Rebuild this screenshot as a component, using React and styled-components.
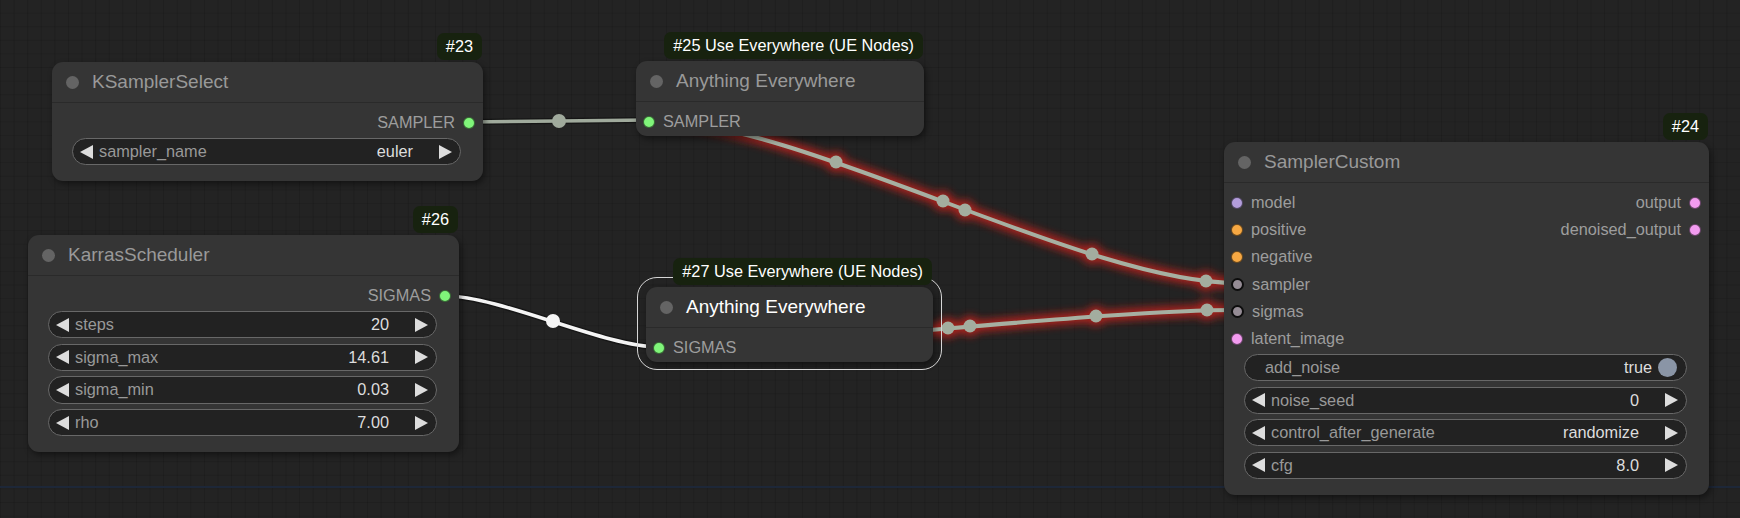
import React from 'react';
import styled, { createGlobalStyle, css } from 'styled-components';

const GlobalStyle = createGlobalStyle`
  html, body {
    margin: 0;
    padding: 0;
    background: #222;
  }
  body {
    font-family: "Liberation Sans", Arial, sans-serif;
  }
`;

// litegraph style bezier between two slot centers
const link = (x1, y1, x2, y2) => {
  const d = Math.hypot(x2 - x1, y2 - y1) * 0.25;
  return `M${x1} ${y1} C${x1 + d} ${y1} ${x2 - d} ${y2} ${x2} ${y2}`;
};

const upperDots = [[836, 162], [943, 201], [965, 210], [1092, 254], [1206, 281]];
const lowerDots = [[948, 328], [970, 326], [1096, 316], [1207, 310]];

const Canvas = styled.div`
  position: relative;
  width: 1740px;
  height: 518px;
  overflow: hidden;
  background-color: #232323;
  background-image:
    linear-gradient(90deg, rgba(0, 0, 0, 0.13) 1px, transparent 1px),
    linear-gradient(0deg, rgba(0, 0, 0, 0.1) 1px, transparent 1px);
  background-size: 13.6px 13.6px;
  font-family: "Liberation Sans", Arial, sans-serif;
`;

const Wires = styled.svg`
  position: absolute;
  inset: 0;
  z-index: 0;
`;

const Node = styled.div`
  position: absolute;
  left: ${({ $x }) => $x}px;
  top: ${({ $y }) => $y}px;
  width: ${({ $w }) => $w}px;
  z-index: 1;
  background: #353535;
  border-radius: 11px;
  box-shadow: 2px 3px 6px rgba(0, 0, 0, 0.45);

  ${({ $selected }) =>
    $selected &&
    css`
      &::before {
        content: '';
        position: absolute;
        inset: -10px -9px -8px -9px;
        border: 1.5px solid #d6d6d6;
        border-radius: 20px;
        pointer-events: none;
      }
    `}
`;

const Badge = styled.div`
  position: absolute;
  right: 1px;
  bottom: calc(100% + 2px);
  z-index: 2;
  height: 27px;
  line-height: 27px;
  padding: 0 9px;
  border-radius: 7px;
  background: #17220f;
  color: #fff;
  font-size: 16.3px;
  white-space: nowrap;
`;

const Title = styled.div`
  display: flex;
  align-items: center;
  gap: 13.5px;
  height: 41px;
  box-sizing: border-box;
  padding-left: 13.5px;
  border-bottom: 1px solid #2a2a2a;
`;

const TitleDot = styled.span`
  width: 13px;
  height: 13px;
  border-radius: 50%;
  background: #646464;
`;

const TitleText = styled.span`
  font-size: 19px;
  color: ${({ $selected }) => ($selected ? '#fff' : '#999')};
  white-space: nowrap;
`;

const Body = styled.div`
  display: flex;
  flex-direction: column;
  padding: 6px 0 ${({ $pb }) => ($pb == null ? 16 : $pb)}px;
`;

const SlotRow = styled.div`
  display: flex;
  align-items: center;
  justify-content: space-between;
  height: 27.2px;
`;

const Slot = styled.span`
  display: flex;
  align-items: center;
  gap: 8px;
  font-size: 16.3px;
  color: #9d9d9d;
  ${({ $out }) =>
    $out
      ? css`
          margin-left: auto;
          padding-right: 8px;
        `
      : css`
          padding-left: 7px;
        `}
`;

const SlotDot = styled.span`
  width: 12px;
  height: 12px;
  box-sizing: border-box;
  border-radius: 50%;
  background: ${({ $color }) => $color};
  border: 1px solid rgba(0, 0, 0, 0.55);
  ${({ $linked }) =>
    $linked &&
    css`
      width: 13px;
      height: 13px;
      background: #958c95;
      border: 2px solid #0d0d0d;
    `}
`;

const Widgets = styled.div`
  display: flex;
  flex-direction: column;
  gap: 5.4px;
  margin-top: 2px;
  padding: 0 22px 0 20px;
`;

const WidgetBox = styled.div`
  display: flex;
  align-items: center;
  height: 27.2px;
  box-sizing: border-box;
  padding: 0 8px 0 7px;
  border: 1px solid #686868;
  border-radius: 14px;
  background: #222;
  font-size: 16.3px;
`;

const ArrowLeft = styled.span`
  width: 0;
  height: 0;
  border-top: 7px solid transparent;
  border-bottom: 7px solid transparent;
  border-right: 13px solid #ddd;
`;

const ArrowRight = styled.span`
  width: 0;
  height: 0;
  border-top: 7px solid transparent;
  border-bottom: 7px solid transparent;
  border-left: 13px solid #ddd;
`;

const WidgetLabel = styled.span`
  flex: 1;
  margin-left: ${({ $plain }) => ($plain ? 13 : 6)}px;
  color: #999;
  white-space: nowrap;
`;

const WidgetValue = styled.span`
  margin-right: ${({ $toggle }) => ($toggle ? 5.5 : 26)}px;
  color: #ddd;
  white-space: nowrap;
`;

const ToggleKnob = styled.span`
  width: 19px;
  height: 19px;
  border-radius: 50%;
  background: #8a95a6;
  margin-right: 1.5px;
`;

const NumberWidget = ({ label, value }) => (
  <WidgetBox>
    <ArrowLeft />
    <WidgetLabel>{label}</WidgetLabel>
    <WidgetValue>{value}</WidgetValue>
    <ArrowRight />
  </WidgetBox>
);

const ToggleWidget = ({ label, value }) => (
  <WidgetBox>
    <WidgetLabel $plain>{label}</WidgetLabel>
    <WidgetValue $toggle>{value}</WidgetValue>
    <ToggleKnob />
  </WidgetBox>
);

const NodeTitle = ({ children, selected }) => (
  <Title>
    <TitleDot />
    <TitleText $selected={selected}>{children}</TitleText>
  </Title>
);

const GREEN = '#80f57a';
const PINK = '#f29bef';
const ORANGE = '#f6a843';
const LAVENDER = '#b39ddb';

const App = () => {
  return (
    <>
      <GlobalStyle />
      <Canvas>
        <Wires width="1740" height="518">
          <defs>
            <filter id="glow" x="-20%" y="-60%" width="140%" height="220%">
              <feGaussianBlur stdDeviation="4.5" />
            </filter>
            <filter id="soft" x="-50%" y="-50%" width="200%" height="200%">
              <feGaussianBlur stdDeviation="0.6" />
            </filter>
          </defs>

          <line x1="0" y1="487" x2="1740" y2="487" stroke="#1d2738" strokeWidth="2" />

          {/* sampler -> AE #25 */}
          <path d={link(469, 122, 649, 120)} stroke="#151515" strokeWidth="6" fill="none" />
          <path d={link(469, 122, 649, 120)} stroke="#a0aa9c" strokeWidth="3.5" fill="none" />
          <circle cx="559" cy="121" r="7" fill="#a0aa9c" filter="url(#soft)" />

          {/* sigmas -> AE #27 */}
          <path d={link(446, 296, 659, 347)} stroke="#111" strokeOpacity="0.7" strokeWidth="6.5" fill="none" />
          <path d={link(446, 296, 659, 347)} stroke="#f4f4f4" strokeWidth="3.5" fill="none" />
          <circle cx="553" cy="321" r="7" fill="#f6f6f6" filter="url(#soft)" />

          {/* use everywhere virtual links, red highlight */}
          <g filter="url(#glow)" opacity="0.85">
            <path d={link(649, 120, 1237, 283)} stroke="#c8231a" strokeWidth="11" fill="none" />
            <path d={link(659, 347, 1237, 310)} stroke="#c8231a" strokeWidth="11" fill="none" />
            {[...upperDots, ...lowerDots].map(([x, y], i) => (
              <circle key={i} cx={x} cy={y} r="10" fill="#c8231a" />
            ))}
          </g>
          <path d={link(649, 120, 1237, 283)} stroke="#a6b0a2" strokeWidth="4" fill="none" />
          <path d={link(659, 347, 1237, 310)} stroke="#a6b0a2" strokeWidth="4" fill="none" />
          {[...upperDots, ...lowerDots].map(([x, y], i) => (
            <circle key={i} cx={x} cy={y} r="6.5" fill="#a3ad9f" />
          ))}
        </Wires>

        <Node $x={52} $y={62} $w={431}>
          <Badge>#23</Badge>
          <NodeTitle>KSamplerSelect</NodeTitle>
          <Body>
            <SlotRow>
              <Slot $out>
                SAMPLER
                <SlotDot $color={GREEN} />
              </Slot>
            </SlotRow>
            <Widgets>
              <NumberWidget label="sampler_name" value="euler" />
            </Widgets>
          </Body>
        </Node>

        <Node $x={28} $y={235} $w={431}>
          <Badge>#26</Badge>
          <NodeTitle>KarrasScheduler</NodeTitle>
          <Body>
            <SlotRow>
              <Slot $out>
                SIGMAS
                <SlotDot $color={GREEN} />
              </Slot>
            </SlotRow>
            <Widgets>
              <NumberWidget label="steps" value="20" />
              <NumberWidget label="sigma_max" value="14.61" />
              <NumberWidget label="sigma_min" value="0.03" />
              <NumberWidget label="rho" value="7.00" />
            </Widgets>
          </Body>
        </Node>

        <Node $x={636} $y={61} $w={288}>
          <Badge>#25 Use Everywhere (UE Nodes)</Badge>
          <NodeTitle>Anything Everywhere</NodeTitle>
          <Body $pb={1}>
            <SlotRow>
              <Slot>
                <SlotDot $color={GREEN} />
                SAMPLER
              </Slot>
            </SlotRow>
          </Body>
        </Node>

        <Node $x={646} $y={287} $w={287} $selected>
          <Badge>#27 Use Everywhere (UE Nodes)</Badge>
          <NodeTitle selected>Anything Everywhere</NodeTitle>
          <Body $pb={1}>
            <SlotRow>
              <Slot>
                <SlotDot $color={GREEN} />
                SIGMAS
              </Slot>
            </SlotRow>
          </Body>
        </Node>

        <Node $x={1224} $y={142} $w={485}>
          <Badge>#24</Badge>
          <NodeTitle>SamplerCustom</NodeTitle>
          <Body>
            <SlotRow>
              <Slot>
                <SlotDot $color={LAVENDER} />
                model
              </Slot>
              <Slot $out>
                output
                <SlotDot $color={PINK} />
              </Slot>
            </SlotRow>
            <SlotRow>
              <Slot>
                <SlotDot $color={ORANGE} />
                positive
              </Slot>
              <Slot $out>
                denoised_output
                <SlotDot $color={PINK} />
              </Slot>
            </SlotRow>
            <SlotRow>
              <Slot>
                <SlotDot $color={ORANGE} />
                negative
              </Slot>
            </SlotRow>
            <SlotRow>
              <Slot>
                <SlotDot $linked />
                sampler
              </Slot>
            </SlotRow>
            <SlotRow>
              <Slot>
                <SlotDot $linked />
                sigmas
              </Slot>
            </SlotRow>
            <SlotRow>
              <Slot>
                <SlotDot $color={PINK} />
                latent_image
              </Slot>
            </SlotRow>
            <Widgets>
              <ToggleWidget label="add_noise" value="true" />
              <NumberWidget label="noise_seed" value="0" />
              <NumberWidget label="control_after_generate" value="randomize" />
              <NumberWidget label="cfg" value="8.0" />
            </Widgets>
          </Body>
        </Node>
      </Canvas>
    </>
  );
};

export default App;
